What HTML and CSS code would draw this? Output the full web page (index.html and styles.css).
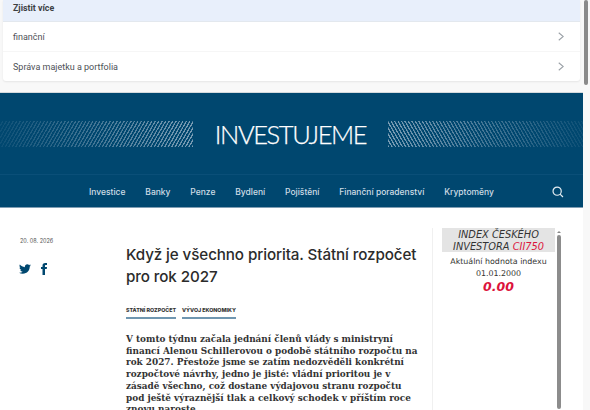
FILE: index.html
```html
<!DOCTYPE html>
<html lang="cs">
<head>
    <meta charset="UTF-8">
    <meta name="viewport" content="width=device-width, initial-scale=1.0">
    <title>Investujeme</title>
    <link rel="stylesheet" href="styles.css">
</head>
<body>
    <div class="page">
        <div class="ad-box">
            <div class="ad-card">
                <div class="ad-head">Zjistit více</div>
                <div class="ad-row"><span>finanční</span><svg class="chev" viewBox="0 0 8 12" width="6" height="9"><path d="M1 1 7 6 1 11" fill="none" stroke="#9aa0a6" stroke-width="1.4"/></svg></div>
                <div class="ad-row"><span>Správa majetku a portfolia</span><svg class="chev" viewBox="0 0 8 12" width="6" height="9"><path d="M1 1 7 6 1 11" fill="none" stroke="#9aa0a6" stroke-width="1.4"/></svg></div>
            </div>
        </div>

        <header class="site-header">
            <div class="brand">
                <div class="stripes stripes-left"></div>
                <div class="logo">INVESTUJEME</div>
                <div class="stripes stripes-right"></div>
            </div>
            <nav class="nav">
                <a href="#">Investice</a>
                <a href="#">Banky</a>
                <a href="#">Penze</a>
                <a href="#">Bydlení</a>
                <a href="#">Pojištění</a>
                <a href="#">Finanční poradenství</a>
                <a href="#">Kryptoměny</a>
                <svg class="search" viewBox="0 0 14 14" width="12" height="12"><circle cx="6" cy="6" r="4.8" fill="none" stroke="#e4edf2" stroke-width="1.4"/><path d="M9.4 9.4 12.8 12.8" stroke="#e4edf2" stroke-width="1.4"/></svg>
            </nav>
        </header>

        <main class="content">
            <aside class="meta">
                <div class="date">20. 08. 2026</div>
                <div class="share">
                    <svg viewBox="0 0 24 24" width="12" height="12"><path fill="#00476f" d="M23.9 4.6c-.9.4-1.8.7-2.8.8 1-.6 1.8-1.6 2.2-2.7-1 .6-2 1-3.1 1.2C19.2 2.9 18 2.3 16.6 2.3c-2.7 0-4.9 2.2-4.9 4.9 0 .4 0 .8.1 1.1C7.7 8.1 4.1 6.1 1.7 3.1c-.4.7-.7 1.6-.7 2.5 0 1.7.9 3.2 2.2 4.1-.8 0-1.6-.2-2.2-.6v.1c0 2.4 1.7 4.4 3.9 4.8-.4.1-.8.2-1.3.2-.3 0-.6 0-.9-.1.6 2 2.4 3.4 4.6 3.4-1.7 1.3-3.8 2.1-6.1 2.1-.4 0-.8 0-1.2-.1 2.2 1.4 4.8 2.2 7.5 2.2 9.1 0 14-7.5 14-14v-.6c1-.7 1.8-1.6 2.4-2.5z"/></svg>
                    <svg viewBox="6 0 12 24" width="6" height="12"><path fill="#00476f" d="M14 8V5.6c0-1 .3-1.6 1.7-1.6H18V0h-3.4C10.7 0 9 2.4 9 5.3V8H6v4h3v12h5V12h3.5l.5-4z"/></svg>
                </div>
            </aside>

            <article class="article">
                <h1>Když je všechno priorita. Státní rozpočet pro rok 2027</h1>
                <div class="tags">
                    <a href="#">Státní rozpočet</a>
                    <a href="#">Vývoj ekonomiky</a>
                </div>
                <p class="perex">V tomto týdnu začala jednání členů vlády s ministryní financí Alenou Schillerovou o podobě státního rozpočtu na rok 2027. Přestože jsme se zatím nedozvěděli konkrétní rozpočtové návrhy, jedno je jisté: vládní prioritou je v zásadě všechno, což dostane výdajovou stranu rozpočtu pod ještě výraznější tlak a celkový schodek v příštím roce znovu naroste.</p>
            </article>

            <aside class="index-box">
                <div class="index-inner">
                    <div class="index-title">INDEX ČESKÉHO INVESTORA <span class="red">CII750</span></div>
                    <div class="index-text">Aktuální hodnota indexu</div>
                    <div class="index-text">01.01.2000</div>
                    <div class="index-value">0.00</div>
                </div>
                <div class="index-scroll">
                    <div class="index-arrow"></div>
                    <div class="index-thumb"></div>
                </div>
            </aside>
        </main>
    </div>
    <div class="page-scroll"><div class="page-thumb"></div></div>
</body>
</html>
```

FILE: styles.css
```css
html, body { margin: 0; padding: 0; height: 410px; overflow: hidden; }
body { display: flex; background-color: #f8f8f8; color: #333; font-family: "Inter", sans-serif; }
.page { width: 583px; height: 410px; overflow: hidden; flex: none; }
.page-scroll { width: 7px; background-color: #f8f8f8; }
.page-thumb { width: 4px; height: 85px; margin-left: 1px; background-color: #8a8a8a; border-radius: 2px; }

.ad-box { height: 93px; padding: 0 3px; box-sizing: border-box; background-color: #f8f8f8; border-bottom: 1px solid #d5dadd; }
.ad-card { background-color: #fff; border-radius: 0 0 3px 3px; box-shadow: 0 1px 2px rgba(0,0,0,0.08); }
.ad-head { height: 22px; line-height: 17px; padding-left: 10px; background-color: #e8effb; border-bottom: 1px solid #e3e8ee; box-sizing: border-box; font-family: "Roboto", sans-serif; font-size: 8.8px; font-weight: 700; color: #3c4043; }
.ad-row { height: 30px; display: flex; align-items: center; justify-content: space-between; padding: 0 16px 0 10px; border-bottom: 1px solid #f6f6f6; box-sizing: border-box; font-family: "Roboto", sans-serif; font-size: 9px; color: #4d5156; }
.ad-row:last-child { height: 29px; border-bottom: none; }

.site-header { background-color: #00476f; height: 115px; border-bottom: 1px solid #7f9db3; box-sizing: border-box; }
.brand { height: 82px; display: flex; align-items: center; justify-content: space-between; border-bottom: 1px solid #0a4f78; box-sizing: border-box; }
.stripes { width: 193px; height: 26px; background-image: repeating-linear-gradient(-60deg, #7a9db4 0, #7a9db4 1px, transparent 1.4px, transparent 3px); }
.stripes-left { -webkit-mask-image: linear-gradient(to right, rgba(0,0,0,0.12), #000); mask-image: linear-gradient(to right, rgba(0,0,0,0.12), #000); }
.stripes-right { width: 195px; background-image: repeating-linear-gradient(60deg, #7a9db4 0, #7a9db4 1px, transparent 1.4px, transparent 3px); -webkit-mask-image: linear-gradient(to left, rgba(0,0,0,0.12), #000); mask-image: linear-gradient(to left, rgba(0,0,0,0.12), #000); }
.logo { font-family: "Lato", sans-serif; font-weight: 300; font-size: 25.5px; letter-spacing: -1.4px; color: #fff; -webkit-text-stroke: 0.25px #fff; white-space: nowrap; }
.nav { height: 32px; display: flex; align-items: center; padding: 1px 0 0 89px; box-sizing: border-box; }
.nav a { font-family: "Inter", sans-serif; font-size: 8.5px; font-weight: 500; color: #cfdde6; text-decoration: none; margin-right: 19.8px; white-space: nowrap; }
.search { margin-left: auto; margin-right: 19px; }

.content { display: flex; background-color: #fff; height: 202px; }
.meta { width: 126px; flex: none; padding: 30px 0 0 20px; box-sizing: border-box; }
.date { font-size: 5.5px; color: #555; }
.share { display: flex; gap: 10px; margin: 19px 0 0 -1px; }
.article { width: 306px; flex: none; padding-top: 36px; box-sizing: border-box; }
.article h1 { margin: 0; font-family: "Inter", sans-serif; font-weight: 500; font-size: 15.2px; letter-spacing: -0.1px; line-height: 22px; color: #2b2b2b; width: 300px; }
.tags { display: flex; gap: 6px; margin-top: 19px; }
.tags a { font-size: 5.3px; font-weight: 800; text-transform: uppercase; color: #333; text-decoration: none; padding-bottom: 4px; border-bottom: 2px solid #6f96b0; }
.perex { margin: 15px 0 0; font-family: "DejaVu Serif", serif; font-weight: 700; font-size: 8.9px; line-height: 11.7px; color: #333; width: 296px; }

.index-box { width: 130px; flex: none; display: flex; margin-top: 20px; padding-left: 9px; border-left: 1px solid #f0f0f0; box-sizing: border-box; height: 182px; }
.index-inner { width: 113px; flex: none; text-align: center; font-family: "DejaVu Sans", sans-serif; }
.index-title { background-color: #e4e4e4; font-size: 9.8px; line-height: 12px; font-style: italic; color: #333; padding-top: 1px; box-sizing: border-box; height: 24px; margin-bottom: 4px; }
.red { color: #dc143c; }
.index-text { font-size: 7.9px; line-height: 11.5px; color: #333; }
.index-value { font-size: 12.5px; font-weight: 700; font-style: italic; color: #dc143c; line-height: 15px; }
.index-scroll { width: 6px; margin-left: 1px; }
.index-arrow { width: 0; height: 0; margin: 3px auto 2px; border-left: 2px solid transparent; border-right: 2px solid transparent; border-bottom: 2px solid #888; }
.index-thumb { width: 4px; height: 174px; margin: 0 auto; background-color: #8c8c8c; border-radius: 2px; }
```
